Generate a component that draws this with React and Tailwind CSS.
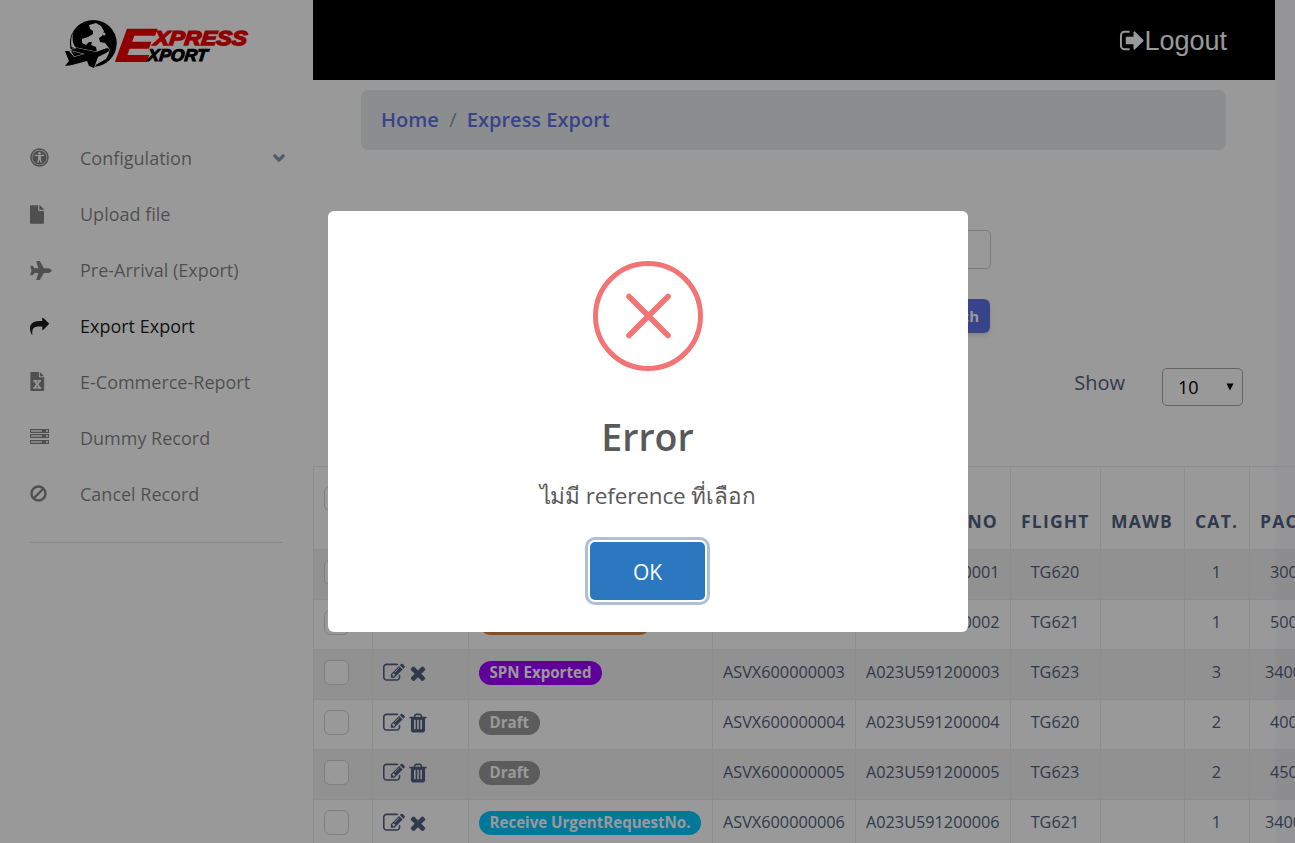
import { FaUniversalAccess, FaFile, FaPlane, FaChevronDown } from "react-icons/fa";

const Fa = ({ d, className }) => (
  <svg viewBox="0 0 1792 1792" fill="currentColor" className={className}><path d={d} /></svg>
);

const EDIT = "M888 1184l116-116-152-152-116 116v56h96v96h56zm440-720q-16-16-33 1l-350 350q-17 17-1 33t33-1l350-350q17-17 1-33zm80 594v190q0 119-84.5 203.5t-203.5 84.5h-832q-119 0-203.5-84.5t-84.5-203.5v-832q0-119 84.5-203.5t203.5-84.5h832q63 0 117 25 15 7 18 23 3 17-9 29l-49 49q-14 14-32 8-23-6-45-6h-832q-66 0-113 47t-47 113v832q0 66 47 113t113 47h832q66 0 113-47t47-113v-126q0-13 9-22l64-64q15-15 35-7t20 29zm-96-738l288 288-672 672h-288v-288zm444 132l-92 92-288-288 92-92q28-28 68-28t68 28l152 152q28 28 28 68t-28 68z";
const TRASH = "M704 1376v-704q0-14-9-23t-23-9h-64q-14 0-23 9t-9 23v704q0 14 9 23t23 9h64q14 0 23-9t9-23zm256 0v-704q0-14-9-23t-23-9h-64q-14 0-23 9t-9 23v704q0 14 9 23t23 9h64q14 0 23-9t9-23zm256 0v-704q0-14-9-23t-23-9h-64q-14 0-23 9t-9 23v704q0 14 9 23t23 9h64q14 0 23-9t9-23zm-544-992h448l-48-117q-7-9-17-11h-317q-10 2-17 11zm928 32v64q0 14-9 23t-23 9h-96v948q0 83-47 143.5t-113 60.5h-832q-66 0-113-58.5t-47-141.5v-952h-96q-14 0-23-9t-9-23v-64q0-14 9-23t23-9h309l70-167q15-37 54-63t79-26h320q40 0 79 26t54 63l70 167h309q14 0 23 9t9 23z";
const TIMES = "M1490 1322q0 40-28 68l-136 136q-28 28-68 28t-68-28l-294-294-294 294q-28 28-68 28t-68-28l-136-136q-28-28-28-68t28-68l294-294-294-294q-28-28-28-68t28-68l136-136q28-28 68-28t68 28l294 294 294-294q28-28 68-28t68 28l136 136q28 28 28 68t-28 68l-294 294 294 294q28 28 28 68z";
const SIGN_OUT = "M704 1440q0 4 1 20t.5 26.5-3 23.5-10 19.5-20.5 6.5h-320q-119 0-203.5-84.5t-84.5-203.5v-704q0-119 84.5-203.5t203.5-84.5h320q13 0 22.5 9.5t9.5 22.5q0 4 1 20t.5 26.5-3 23.5-10 19.5-20.5 6.5h-320q-66 0-113 47t-47 113v704q0 66 47 113t113 47h312l11.5 1 11.5 3 8 5.5 7 9 2 13.5zm928-544q0 26-19 45l-544 544q-19 19-45 19t-45-19-19-45v-288h-448q-26 0-45-19t-19-45v-384q0-26 19-45t45-19h448v-288q0-26 19-45t45-19 45 19l544 544q19 19 19 45z";
const BAN = "M1440 893q0-161-87-295l-754 753q137 89 297 89 111 0 211.5-43.5t173.5-116.5 116-174.5 43-212.5zm-999 299l755-754q-135-91-300-91-148 0-273 73t-198 199-73 274q0 162 89 299zm1223-299q0 157-61 300t-163.5 246-245 164-298.5 61-298.5-61-245-164-163.5-246-61-300 61-299.5 163.5-245.5 245-164 298.5-61 298.5 61 245 164 163.5 245.5 61 299.5z";
const SHARE = "M1792 640q0 26-19 45l-512 512q-19 19-45 19t-45-19-19-45v-256h-224q-98 0-175.5 6t-154 21.5-133 42.5-105.5 69.5-80 101-48.5 138.5-17.5 181q0 55 5 123 0 6 2.5 23.5t2.5 26.5q0 15-8.5 25t-23.5 10q-16 0-28-17-7-9-13-22t-13.5-30-10.5-24q-127-285-127-451 0-199 53-333 162-403 875-403h224v-256q0-26 19-45t45-19 45 19l512 512q19 19 19 45z";

const ExcelIcon = () => (
  <svg viewBox="0 0 15 20" className="-mt-px h-[19px] w-[15px]" fill="currentColor">
    <path fillRule="evenodd" d="M1 0H9V5.5H14.5V19Q14.5 20 13.5 20H1Q0 20 0 19V1Q0 0 1 0ZM10 0L14.5 4.5H10ZM3.2 8.5V10.2H4.2L5.9 12.9L4 15.8H3V17.5H6.8V15.8H6.2L7.1 14.2L8.1 15.8H7.5V17.5H11.4V15.8H10.4L8.4 12.8L10.2 10.2H11.2V8.5H7.5V10.2H8.1L7.2 11.6L6.3 10.2H6.9V8.5Z" />
  </svg>
);
const ServerIcon = () => (
  <svg viewBox="0 0 19 15" className="-mt-[3px] h-[15px] w-[19px]" shapeRendering="crispEdges">
    {[0, 5, 11].map((y) => (
      <g key={y}>
        <rect x="0" y={y} width="19" height="4" fill="currentColor" />
        <rect x="1" y={y + 1} width="11" height="2" fill="#fff" opacity=".7" />
        <rect x="16" y={y + 1} width="2" height="2" fill="#fff" opacity=".8" />
      </g>
    ))}
  </svg>
);

const NAV = [
  { label: "Configulation", icon: <FaUniversalAccess className="-mt-px size-[19px]" />, chevron: true },
  { label: "Upload file", icon: <FaFile className="h-[19px] w-[14px]" /> },
  { label: "Pre-Arrival (Export)", icon: <FaPlane className="h-[19px] w-[22px]" /> },
  { label: "Export Export", icon: <Fa d={SHARE} className="size-[19px]" />, active: true },
  { label: "E-Commerce-Report", icon: <ExcelIcon /> },
  { label: "Dummy Record", icon: <ServerIcon /> },
  { label: "Cancel Record", icon: <Fa d={BAN} className="-mt-[2px] -ml-[1px] size-[19px]" /> },
];

const ROWS = [
  { badge: "Draft", color: "bg-[#999999]", act: TRASH, ref: "ASVX600000001", hawb: "A023U591200001", flight: "TG620", cat: 1, pack: "3000" },
  { badge: "Waiting Confirmed", color: "bg-[#d9863f] min-w-[172px]", act: TIMES, ref: "ASVX600000002", hawb: "A023U591200002", flight: "TG621", cat: 1, pack: "5000" },
  { badge: "SPN Exported", color: "bg-[#9d00ff]", act: TIMES, ref: "ASVX600000003", hawb: "A023U591200003", flight: "TG623", cat: 3, pack: "34000" },
  { badge: "Draft", color: "bg-[#999999]", act: TRASH, ref: "ASVX600000004", hawb: "A023U591200004", flight: "TG620", cat: 2, pack: "4000" },
  { badge: "Draft", color: "bg-[#999999]", act: TRASH, ref: "ASVX600000005", hawb: "A023U591200005", flight: "TG623", cat: 2, pack: "4500" },
  { badge: "Receive UrgentRequestNo.", color: "bg-[#00c8ff]", act: TIMES, ref: "ASVX600000006", hawb: "A023U591200006", flight: "TG621", cat: 1, pack: "34000" },
];

const Logo = () => (
  <svg width="190" height="54" viewBox="62 16 190 54" className="mt-4 ml-[62px] block">
    <circle cx="93.3" cy="43.3" r="23.4" />
    <g fill="#fff">
      <path d="M89 25L96 23L101 26L104 31L102 36L99 38L100 42L105 43L109 48L109 53L106 59L99 63L94 66L95 57L97 52L96 47L91 45L92 42L89 42L86 45L82 43L82 39L88 37L93 34L93 31L90 29Z" />
      <path d="M71.5 47Q70 38 74 31Q71 38 74 45L77 49ZM66 57L92 61L92 70L66 70Z" />
      <circle cx="104" cy="34" r="1.5" />
    </g>
    <path d="M65 51L69 51L74 57L85 54L70 50L77 48L96 52L107 48Q112 50 106 53L98 57L94 68L89 66L87 61L72 65L65 66L69 61Z" stroke="#fff" strokeWidth="1.2" paintOrder="stroke" />
    <g fontFamily="Liberation Sans" fontWeight="700" fontStyle="italic" strokeLinejoin="miter">
      <text x="0" y="0" transform="translate(115.5 61.3) skewX(-8)" fontSize="45.5" textLength="35" lengthAdjust="spacingAndGlyphs" fill="#f00000" stroke="#f00000" strokeWidth="2">E</text>
      <text x="0" y="0" transform="translate(153.5 44.6) skewX(-6)" fontSize="20" textLength="93" lengthAdjust="spacingAndGlyphs" fill="#f00000" stroke="#f00000" strokeWidth="1.4">XPRESS</text>
      <text x="0" y="0" transform="translate(147 61.3) skewX(-6)" fontSize="17" textLength="60" lengthAdjust="spacingAndGlyphs" fill="#000" stroke="#000" strokeWidth="1">XPORT</text>
    </g>
  </svg>
);

const TH = "border-l border-t border-[#e9ecef] px-[10px] pt-[30px] text-left align-top text-[17.5px] leading-[48px] font-bold tracking-[1.2px]";
const TD = "h-[50px] border-l border-t border-[#e9ecef] px-[10px] pt-0 pb-[4px] text-center align-middle";
const TT = TD + " pr-[11px]";
const Check = () => <span className="block size-[25px] rounded-[6px] border border-[#d3d3d6] bg-white" />;

export default function App() {
  return (
    <div className="relative flex h-[843px] w-[1295px] overflow-hidden bg-[#f8f9fe] font-['Open_Sans','Noto_Sans',sans-serif] text-[#525f7f]">
      <aside className="w-[313px] shrink-0 bg-white">
        <Logo />
        <nav className="mt-[60px]">
          {NAV.map((n) => (
            <a key={n.label} className={"flex h-[56px] items-center pl-[30px] text-[18px] " + (n.active ? "text-black/90" : "text-black/50")}>
              <span className={"flex w-[50px] " + (n.active ? "text-black/90" : "text-[#848484]")}>{n.icon}</span>
              <span className="whitespace-nowrap">{n.label}</span>
              {n.chevron && <FaChevronDown className="mr-[28px] ml-auto size-3 text-[#8898aa]" stroke="currentColor" strokeWidth="60" />}
            </a>
          ))}
        </nav>
        <div className="mt-5 ml-[30px] w-[253px] border-t border-black/10" />
      </aside>

      <main className="w-[962px] shrink-0 bg-white">
        <header className="flex h-20 items-center justify-end bg-black pr-[48px] font-['Liberation_Sans',sans-serif] text-[27px] text-white">
          <Fa d={SIGN_OUT} className="-mr-[2px] size-[27px]" />
          <span className="pt-[2px]">Logout</span>
        </header>
        <div className="mt-[10px] ml-[48px] flex h-[60px] w-[865px] items-center rounded-[7px] bg-[#e9ecef] pl-5 text-[20px] font-semibold text-[#5e72e4]">
          <a>Home</a>
          <span className="w-[28px] text-center font-normal text-[#8898aa]">/</span>
          <a>Express Export</a>
        </div>
        <div className="mt-20 mr-[284px] flex justify-end">
          <input className="h-[39px] w-[300px] rounded-[5px] border border-[#cad1d7]" />
        </div>
        <div className="mt-[30px] mr-[285px] flex justify-end">
          <button className="h-[34px] rounded-[6px] bg-[#5e72e4] px-[11px] text-[15px] font-bold text-white shadow-md">Search</button>
        </div>
        <div className="mt-[35px] mr-[32px] flex items-start justify-end text-[20px]">
          <span className="mr-[37px] leading-[30px]">Show</span>
          <div className="flex h-[38px] w-[81px] items-center justify-between rounded-[5px] border border-[#a9a9a9] pr-[8px] pl-[15px] text-[18px] text-black">
            <span>10</span>
            <svg viewBox="0 0 8 8" className="size-2"><path d="M0.5 0.5H7.5L4 7.5Z" /></svg>
          </div>
        </div>
        <table className="mt-[60px] w-[1100px] table-fixed border-separate border-spacing-0 text-[16.25px]">
          <colgroup>
            <col className="w-[59px]" /><col className="w-[96px]" /><col className="w-[244px]" /><col className="w-[143px]" /><col className="w-[155px]" />
            <col className="w-[90px]" /><col className="w-[84px]" /><col className="w-[65px]" /><col />
          </colgroup>
          <thead>
            <tr className="h-[83px]">
              <th className="border-t border-l border-[#e9ecef] px-[10px] pt-[19px] align-top"><Check /></th>
              <th className={TH} />
              <th className={TH}>STATUS</th>
              <th className={TH}>REF NO</th>
              <th className={TH + " text-right! pr-[12px]"}>HAWB NO</th>
              <th className={TH}>FLIGHT</th>
              <th className={TH}>MAWB</th>
              <th className={TH}>CAT.</th>
              <th className={TH}>PACKAGE</th>
            </tr>
          </thead>
          <tbody>
            {ROWS.map((r) => (
              <tr key={r.ref} className="odd:bg-black/5">
                <td className={TD}><Check /></td>
                <td className={TD + " pl-[9.5px]!"}>
                  <span className="flex items-center gap-[2.5px]">
                    <Fa d={EDIT} className="size-[22px]" />
                    <Fa d={r.act} className="size-[22px]" />
                  </span>
                </td>
                <td className={TD}>
                  <span className={"flex h-6 w-fit items-center rounded-full px-[10.5px] text-[15.1px] font-bold whitespace-nowrap text-white " + r.color}>{r.badge}</span>
                </td>
                <td className={TT}>{r.ref}</td>
                <td className={TT}>{r.hawb}</td>
                <td className={TT}>{r.flight}</td>
                <td className={TT} />
                <td className={TT}>{r.cat}</td>
                <td className={TT + " text-left!" + (r.pack.length > 4 ? " pl-[15px]!" : " pl-[20px]!")}>{r.pack}</td>
              </tr>
            ))}
          </tbody>
        </table>
      </main>

      <div className="absolute inset-0 flex items-center justify-center bg-black/40">
        <div className="flex h-[421px] w-[640px] flex-col items-center rounded-[6px] bg-white text-[#595959]">
          <svg viewBox="0 0 110 110" className="mt-[50px] size-[110px]" fill="none" stroke="#f27474">
            <circle cx="55" cy="55" r="52.5" strokeWidth="5" />
            <path d="M36 35.5L75 74.5M75 35.5L36 74.5" strokeWidth="5.6" strokeLinecap="round" />
          </svg>
          <h2 className="mt-[41px] text-[37.5px] leading-[50px] font-semibold">Error</h2>
          <p className="mt-[17px] text-[22.5px] leading-[34px] tracking-[-0.15px]">ไม่มี reference ที่เลือก</p>
          <button className="mt-[29px] h-[58px] w-[115px] rounded-[5px] bg-[#2b77c0] pt-[3px] text-[21px] text-white shadow-[0_0_0_2px_#fff,0_0_0_5px_rgba(50,100,150,0.4)]">OK</button>
        </div>
      </div>
    </div>
  );
}
